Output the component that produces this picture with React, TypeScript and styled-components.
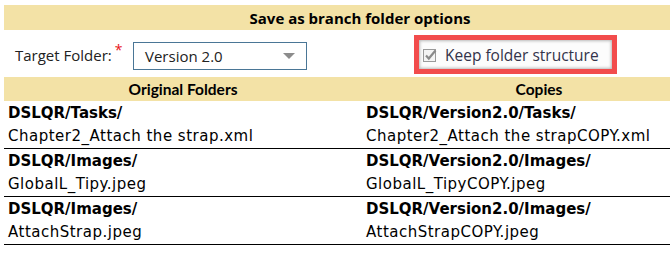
import React from "react";
import styled, { createGlobalStyle } from "styled-components";

const rows = [
  {
    srcPath: "DSLQR/Tasks/",
    srcFile: "Chapter2_Attach the strap.xml",
    dstPath: "DSLQR/Version2.0/Tasks/",
    dstFile: "Chapter2_Attach the strapCOPY.xml",
  },
  {
    srcPath: "DSLQR/Images/",
    srcFile: "GlobalL_Tipy.jpeg",
    dstPath: "DSLQR/Version2.0/Images/",
    dstFile: "GlobalL_TipyCOPY.jpeg",
  },
  {
    srcPath: "DSLQR/Images/",
    srcFile: "AttachStrap.jpeg",
    dstPath: "DSLQR/Version2.0/Images/",
    dstFile: "AttachStrapCOPY.jpeg",
  },
];

export default function App() {
  return (
    <>
      <GlobalStyle />
      <Page>
        <TitleBar>Save as branch folder options</TitleBar>
        <OptionsRow>
          <FieldLabel>
            Target Folder:<Required>*</Required>
          </FieldLabel>
          <Select>
            <span>Version 2.0</span>
            <Caret />
          </Select>
          <Highlight>
            <CheckButton>
              <CheckIcon width="14" height="14" viewBox="0 0 14 14">
                <rect x="0.5" y="1.5" width="12" height="12" fill="#f4f4f4" stroke="#9a9a9a" />
                <path d="M3 7.5 L5.8 10.5 L12.5 2.5" fill="none" stroke="#8a8a8a" strokeWidth="2.2" />
              </CheckIcon>
              Keep folder structure
            </CheckButton>
          </Highlight>
        </OptionsRow>
        <HeaderRow>
          <HeaderCell>Original Folders</HeaderCell>
          <HeaderCell>Copies</HeaderCell>
        </HeaderRow>
        {rows.map((r, i) => (
          <Row key={i}>
            <Cell>
              <PathLine>{r.srcPath}</PathLine>
              <FileLine>{r.srcFile}</FileLine>
            </Cell>
            <Cell>
              <PathLine>{r.dstPath}</PathLine>
              <FileLine>{r.dstFile}</FileLine>
            </Cell>
          </Row>
        ))}
      </Page>
    </>
  );
}

const GlobalStyle = createGlobalStyle`
  html, body {
    margin: 0;
    padding: 0;
    background: #ffffff;
    overflow: hidden;
  }
`;
const Page = styled.div`
  width: 712px;
  padding: 5px 0 0 4px;
  font-family: "Open Sans", "DejaVu Sans", sans-serif;
  color: #000;
`;
const TitleBar = styled.div`
  height: 25px;
  display: flex;
  align-items: center;
  justify-content: center;
  background-color: #f3e2a6;
  font-size: 15px;
  font-weight: 700;
`;
const OptionsRow = styled.div`
  height: 47px;
  display: flex;
  align-items: center;
  padding-left: 11px;
`;
const FieldLabel = styled.div`
  width: 118px;
  margin-top: 3px;
  font-size: 15px;
  color: #222;
  white-space: nowrap;
`;
const Required = styled.span`
  position: relative;
  top: -6px;
  margin-left: 3px;
  color: #e8141a;
  font-size: 14px;
`;
const Select = styled.div`
  width: 174px;
  height: 28px;
  margin-top: 5px;
  padding: 0 10px 0 11px;
  box-sizing: border-box;
  display: flex;
  align-items: center;
  justify-content: space-between;
  border: 1px solid #4a7696;
  font-size: 15px;
  color: #222;
`;
const Caret = styled.div`
  width: 0;
  height: 0;
  border-left: 6px solid transparent;
  border-right: 6px solid transparent;
  border-top: 6px solid #8c8c8c;
  margin-right: 1px;
`;
const Highlight = styled.div`
  margin-left: 107px;
  margin-top: 2px;
  border: 5px solid #f24c4c;
  width: 203px;
  height: 39px;
  box-sizing: border-box;
`;
const CheckButton = styled.div`
  height: 100%;
  display: flex;
  align-items: center;
  gap: 8px;
  padding-left: 4px;
  box-sizing: border-box;
  background: #fcfcfc;
  box-shadow: inset 0 0 3px 1px #b8b8b8;
  font-size: 15.5px;
  color: #33334a;
  white-space: nowrap;
`;
const CheckIcon = styled.svg`
  flex: none;
`;
const HeaderRow = styled.div`
  height: 24px;
  display: grid;
  grid-template-columns: 358px 354px;
  align-items: center;
  background-color: #f3e2a6;
`;
const HeaderCell = styled.div`
  text-align: center;
  font-family: "Lato", sans-serif;
  font-size: 15.5px;
  font-weight: 700;
`;
const Row = styled.div`
  height: 48px;
  display: grid;
  grid-template-columns: 358px 354px;
  border-bottom: 1px solid #000;
  box-sizing: border-box;
`;
const Cell = styled.div`
  padding: 1px 0 0 4px;
  font-family: "DejaVu Sans", sans-serif;
  font-size: 15px;
  line-height: 23px;
  white-space: nowrap;
`;
const PathLine = styled.div`
  font-weight: 700;
`;
const FileLine = styled.div`
  letter-spacing: 0.5px;
`;
